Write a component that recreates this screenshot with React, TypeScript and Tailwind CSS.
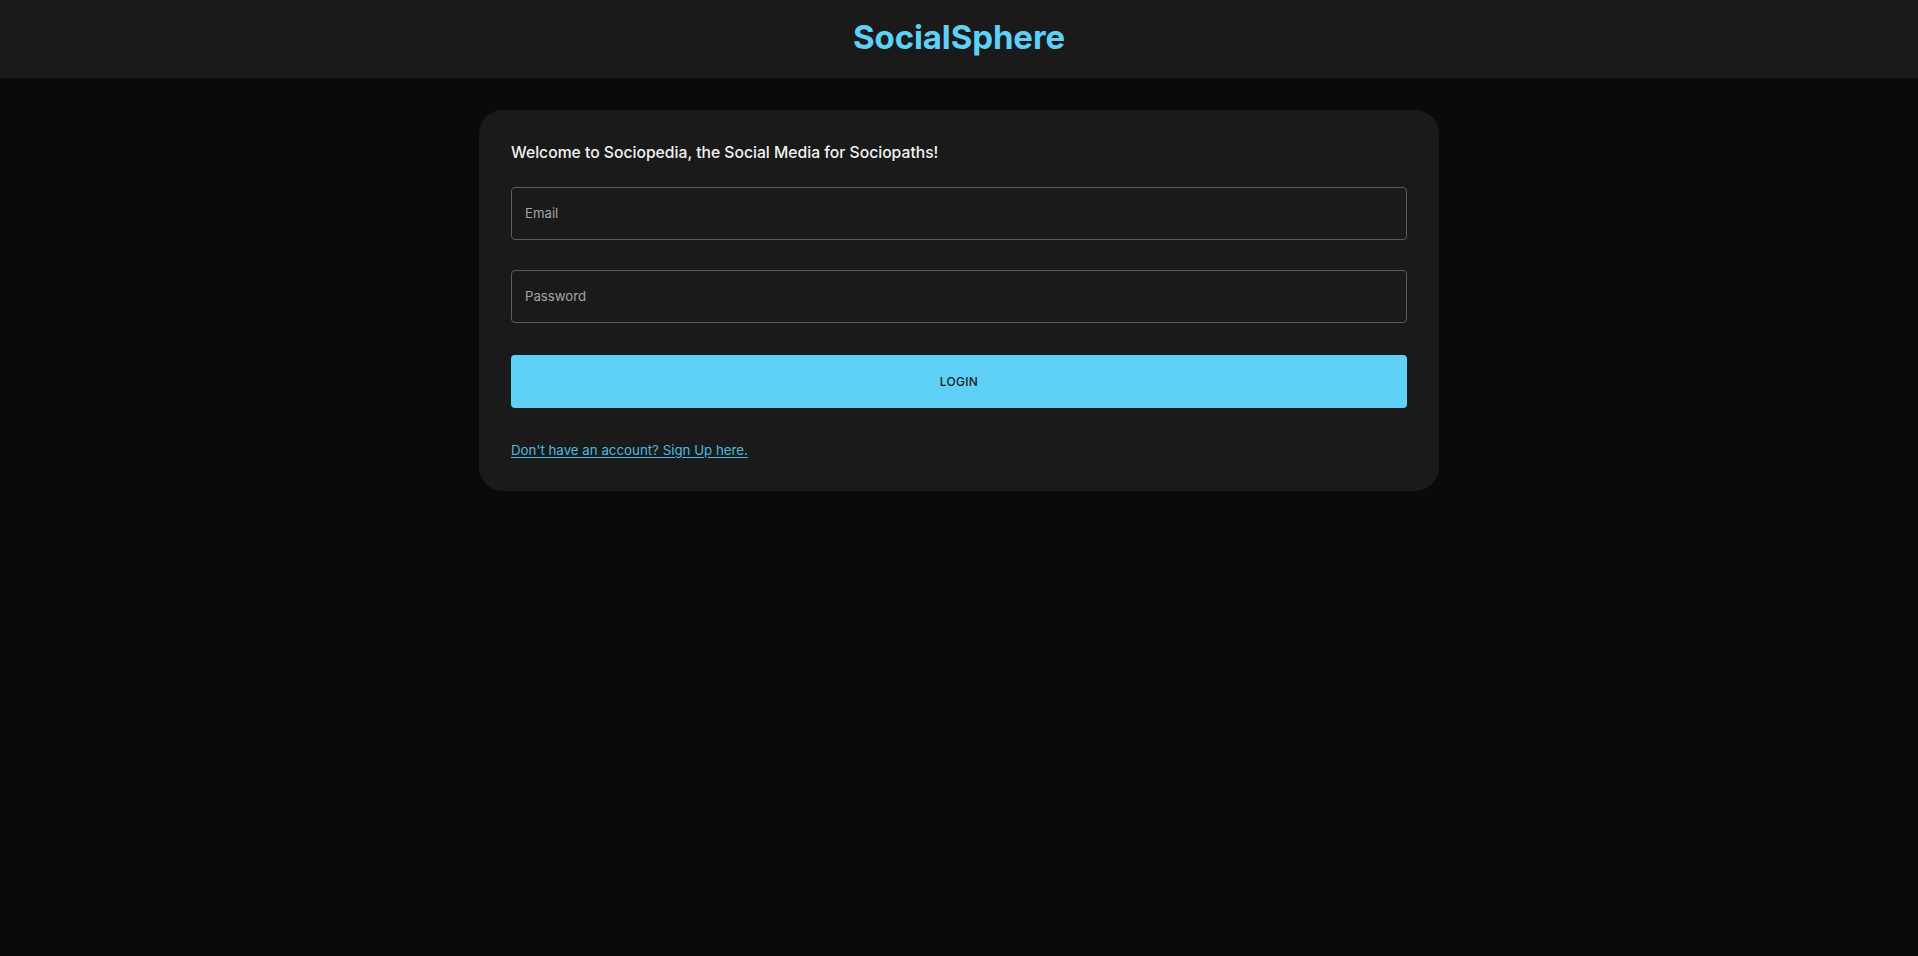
import React from "react";

export default function App() {
  return (
    <div
      className="min-h-[956px] w-full bg-[#0a0a0a]"
      style={{ fontFamily: "Inter, 'Noto Sans', sans-serif" }}
    >
      <header className="flex h-[78px] w-full items-center justify-center bg-[#1a1a1a] pb-[4px]">
        <h1 className="text-[33px] font-bold leading-none tracking-[-0.1px] text-[#5fd0f7]">
          SocialSphere
        </h1>
      </header>
      <main className="flex justify-center pt-[32px]">
        <div className="w-[960px] rounded-[24px] bg-[#1a1a1a] px-[32px] pt-[32px] pb-[31px]">
          <h5 className="mb-[24px] text-[15.7px] font-medium leading-[21px] text-[#f2f2f2]">
            Welcome to Sociopedia, the Social Media for Sociopaths!
          </h5>
          <form className="flex flex-col gap-[30px]" onSubmit={(e) => e.preventDefault()}>
            <div className="flex h-[53px] items-center rounded-[4px] border border-[#5b5b5b] px-[13px]">
              <input
                className="w-full bg-transparent text-[13.2px] text-[#e0e0e0] outline-none placeholder:text-[#a6a6a6]"
                placeholder="Email"
              />
            </div>
            <div className="flex h-[53px] items-center rounded-[4px] border border-[#5b5b5b] px-[13px]">
              <input
                type="password"
                className="w-full bg-transparent text-[13.2px] text-[#e0e0e0] outline-none placeholder:text-[#a6a6a6]"
                placeholder="Password"
              />
            </div>
          </form>
          <button className="mt-[32px] flex h-[53px] w-full items-center justify-center rounded-[4px] bg-[#5fd1f7] text-[12px] font-medium tracking-[0.3px] text-[#1c2228]">
            LOGIN
          </button>
          <div className="mt-[31px] leading-[20px]">
            <a
              href="#"
              className="text-[13.3px] text-[#4fb8de] underline underline-offset-2"
            >
              Don't have an account? Sign Up here.
            </a>
          </div>
        </div>
      </main>
    </div>
  );
}
